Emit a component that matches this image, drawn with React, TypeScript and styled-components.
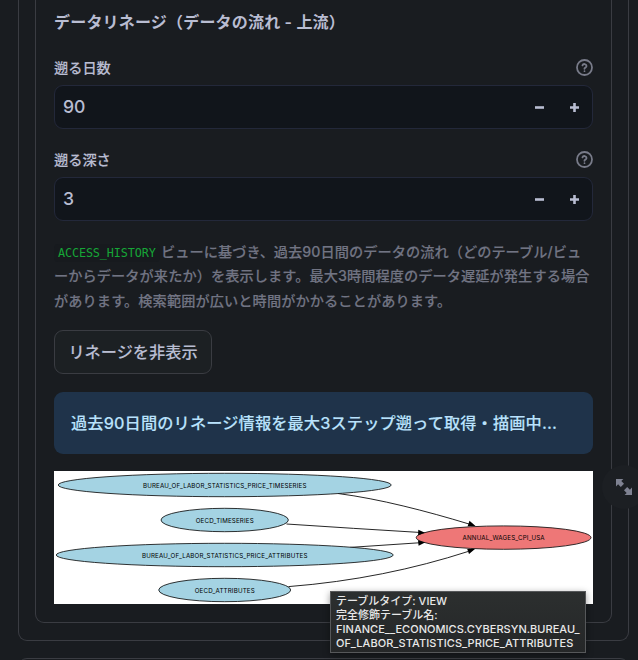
import React from "react";
import styled, { createGlobalStyle } from "styled-components";

const GlobalStyle = createGlobalStyle`
  * { box-sizing: border-box; }
  body {
    margin: 0;
    background: #191c20;
    color: #b9bdd2;
    font-family: Inter, "Noto Sans CJK JP", sans-serif;
    font-weight: 500;
    overflow: hidden;
  }
`;

const Page = styled.main`
  position: relative;
  width: 638px;
  height: 660px;
  overflow: hidden;
  background: #191c20;
`;

const OuterCard = styled.section`
  margin: 0 9px 0 18px;
  height: 641px;
  padding: 0 16px 17px;
  border: 1px solid #3a3c42;
  border-top: 0;
  border-radius: 0 0 9px 9px;
`;

const InnerCard = styled.div`
  height: 623px;
  padding: 0 18px;
  border: 1px solid #3a3c42;
  border-top: 0;
  border-radius: 0 0 9px 9px;
  display: flex;
  flex-direction: column;
`;

const NextCard = styled.section`
  margin: 17px 9px 0 18px;
  height: 40px;
  border: 1px solid #3a3c42;
  border-radius: 9px;
`;

const Title = styled.h4`
  margin: 9px 0 0;
  height: 26px;
  font-size: 16px;
  line-height: 26px;
  font-weight: 600;
  letter-spacing: 0.19px;
  white-space: nowrap;
`;

const Field = styled.div<{ $gap: number }>`
  margin-top: ${(p) => p.$gap}px;
`;

const FieldHead = styled.div`
  display: flex;
  align-items: center;
  justify-content: space-between;
  height: 22px;
  margin-bottom: 6px;
  padding-bottom: 1px;
  font-size: 14.2px;
  line-height: 20px;
  -webkit-text-stroke: 0.15px currentColor;
`;

const NumberBox = styled.div`
  display: flex;
  align-items: center;
  height: 44px;
  padding-left: 8px;
  border: 1px solid #23283a;
  border-radius: 9px;
  background: #11151b;
  font-size: 17.6px;
`;

const NumberValue = styled.span`
  flex: 1;
  padding-bottom: 1px;
`;

const StepButton = styled.button`
  display: flex;
  align-items: center;
  justify-content: center;
  width: 35px;
  height: 42px;
  padding: 0;
  border: 0;
  background: none;
  color: #b9bdd2;
`;

const Caption = styled.p`
  margin: 19px 0 0;
  font-size: 14.2px;
  line-height: 24.4px;
  color: #717483;
  -webkit-text-stroke: 0.15px currentColor;
`;

const CaptionLine = styled.span<{ $spacing: number }>`
  display: block;
  height: 24.4px;
  white-space: nowrap;
  letter-spacing: ${(p) => p.$spacing}px;
`;

const Code = styled.code`
  display: inline-block;
  height: 18px;
  margin-right: -2.5px;
  padding: 0 4px;
  border-radius: 4px;
  background: #171a1e;
  color: #16a637;
  font: 400 11.8px/18px "DejaVu Sans Mono", monospace;
  letter-spacing: -0.13px;
  -webkit-text-stroke: 0;
`;

const ToggleButton = styled.button`
  width: 158px;
  height: 44px;
  margin-top: 17px;
  padding: 0 0 2px;
  flex-shrink: 0;
  border: 1px solid #3a3c42;
  border-radius: 9px;
  background: #1c2023;
  color: #b9bdd2;
  font: inherit;
  font-size: 16.2px;
  -webkit-text-stroke: 0.12px currentColor;
`;

const Info = styled.div`
  display: flex;
  align-items: center;
  flex-shrink: 0;
  height: 62px;
  margin-top: 18px;
  padding: 0 0 2px 17px;
  border-radius: 9px;
  background: #1f334a;
  color: #b9e2fc;
  font-size: 16.2px;
  letter-spacing: 0.14px;
  white-space: nowrap;
  -webkit-text-stroke: 0.12px currentColor;
`;

const Graph = styled.svg`
  display: block;
  flex-shrink: 0;
  width: 539px;
  height: 133px;
  margin-top: 17px;
  background: #fff;
`;

const NodeText = styled.text`
  font: 400 6.2px Inter, sans-serif;
  fill: #000;
`;

const Tooltip = styled.div`
  position: absolute;
  left: 330px;
  top: 591px;
  width: 256px;
  height: 62px;
  padding: 2px 5px;
  border: 1px solid #56585a;
  background: linear-gradient(#2c2f2f, #252728);
  box-shadow: 0 2px 7px rgba(0, 0, 0, 0.4);
  color: #e8e8e8;
  font-size: 11px;
  line-height: 14px;
`;

const TooltipLine = styled.div<{ $spacing?: number }>`
  white-space: nowrap;
  letter-spacing: ${(p) => p.$spacing ?? 0}px;
`;

const ExpandButton = styled.button`
  position: absolute;
  left: 602px;
  top: 465px;
  width: 44px;
  height: 44px;
  padding: 0;
  border: 0;
  border-radius: 50%;
  background: #1c1f23;
`;

const ExpandIcon = styled.svg`
  position: absolute;
  left: 14px;
  top: 14px;
`;

const HelpIcon = () => (
  <svg width="17" height="17" viewBox="0 0 24 24" fill="none" stroke="#787b89" strokeWidth="2.5" strokeLinecap="round" strokeLinejoin="round">
    <circle cx="12" cy="12" r="10.6" />
    <path d="M9.1 9a3 3 0 0 1 5.8 1c0 2-3 2.7-3 3.8M12 17.2h.01" />
  </svg>
);

const NumberField = ({ label, value, gap }: { label: string; value: number; gap: number }) => (
  <Field $gap={gap}>
    <FieldHead>
      <span>{label}</span>
      <HelpIcon />
    </FieldHead>
    <NumberBox>
      <NumberValue>{value}</NumberValue>
      <StepButton aria-label="decrease">
        <svg width="9" height="9"><path d="M0 4.5h9" stroke="currentColor" strokeWidth="2.6" /></svg>
      </StepButton>
      <StepButton aria-label="increase">
        <svg width="9" height="9"><path d="M0 4.5h9M4.5 0v9" stroke="currentColor" strokeWidth="2.6" /></svg>
      </StepButton>
    </NumberBox>
  </Field>
);

const nodes = [
  { label: "BUREAU_OF_LABOR_STATISTICS_PRICE_TIMESERIES", x: 170.7, y: 14, rx: 166.5, width: 163.5, fill: "#a4d3e3" },
  { label: "OECD_TIMESERIES", x: 170.7, y: 49, rx: 63.7, width: 58, fill: "#a4d3e3" },
  { label: "BUREAU_OF_LABOR_STATISTICS_PRICE_ATTRIBUTES", x: 170.7, y: 84, rx: 168.5, width: 165.5, fill: "#a4d3e3" },
  { label: "OECD_ATTRIBUTES", x: 170.7, y: 119, rx: 66, width: 60, fill: "#a4d3e3" },
  { label: "ANNUAL_WAGES_CPI_USA", x: 449.6, y: 66.6, rx: 87.4, width: 82, fill: "#ee7777" },
];

const edges = [
  "M284 22.5C326 28 372 40 415 53",
  "M232.5 53Q300 57.5 365 61.4",
  "M296 76.4L365 71.8",
  "M234.5 115.6C300 110.5 360 98 414 80.5",
];

const LineageGraph = () => (
  <Graph viewBox="0 0 539 133">
    {edges.map((d) => (
      <path key={d} d={d} fill="none" stroke="#000" strokeWidth="0.85" />
    ))}
    {nodes.map((n) => (
      <g key={n.label}>
        <ellipse cx={n.x} cy={n.y} rx={n.rx} ry="11.7" fill={n.fill} stroke="#111" strokeWidth="0.85" />
        <NodeText x={n.x - n.width / 2} y={n.y + 2.6} textLength={n.width}>{n.label}</NodeText>
      </g>
    ))}
    <path d="M415.5 49.8L421.5 54.9L413.6 55.2ZM364.3 58.7L371 61.8L364.1 64.2ZM364 69.2L371 71.4L364.6 74.7ZM413.2 78L421 78L415 83Z" fill="#000" />
  </Graph>
);

export default function App() {
  return (
    <Page>
      <GlobalStyle />
      <OuterCard>
        <InnerCard>
          <Title>データリネージ（データの流れ - 上流）</Title>
          <NumberField label="遡る日数" value={90} gap={22} />
          <NumberField label="遡る深さ" value={3} gap={20} />
          <Caption>
            <CaptionLine $spacing={0.05}><Code>ACCESS_HISTORY</Code> ビューに基づき、過去90日間のデータの流れ（どのテーブル/ビュ</CaptionLine>
            <CaptionLine $spacing={0.08}>ーからデータが来たか）を表示します。最大3時間程度のデータ遅延が発生する場合</CaptionLine>
            <CaptionLine $spacing={0.1}>があります。検索範囲が広いと時間がかかることがあります。</CaptionLine>
          </Caption>
          <ToggleButton>リネージを非表示</ToggleButton>
          <Info>過去90日間のリネージ情報を最大3ステップ遡って取得・描画中...</Info>
          <LineageGraph />
        </InnerCard>
      </OuterCard>
      <NextCard />
      <ExpandButton aria-label="fullscreen">
        <ExpandIcon width="16" height="16" viewBox="0 0 16 16">
          <path d="M0 0H7.4L5.3 2.1L8 4.8L4.8 8L2.1 5.3L0 7.4ZM16 16H8.6L10.7 13.9L8 11.2L11.2 8L13.9 10.7L16 8.6Z" fill="#7f8292" />
        </ExpandIcon>
      </ExpandButton>
      <Tooltip>
        <TooltipLine>テーブルタイプ: VIEW</TooltipLine>
        <TooltipLine>完全修飾テーブル名:</TooltipLine>
        <TooltipLine $spacing={0.03}>FINANCE__ECONOMICS.CYBERSYN.BUREAU_</TooltipLine>
        <TooltipLine $spacing={0.07}>OF_LABOR_STATISTICS_PRICE_ATTRIBUTES</TooltipLine>
      </Tooltip>
    </Page>
  );
}
